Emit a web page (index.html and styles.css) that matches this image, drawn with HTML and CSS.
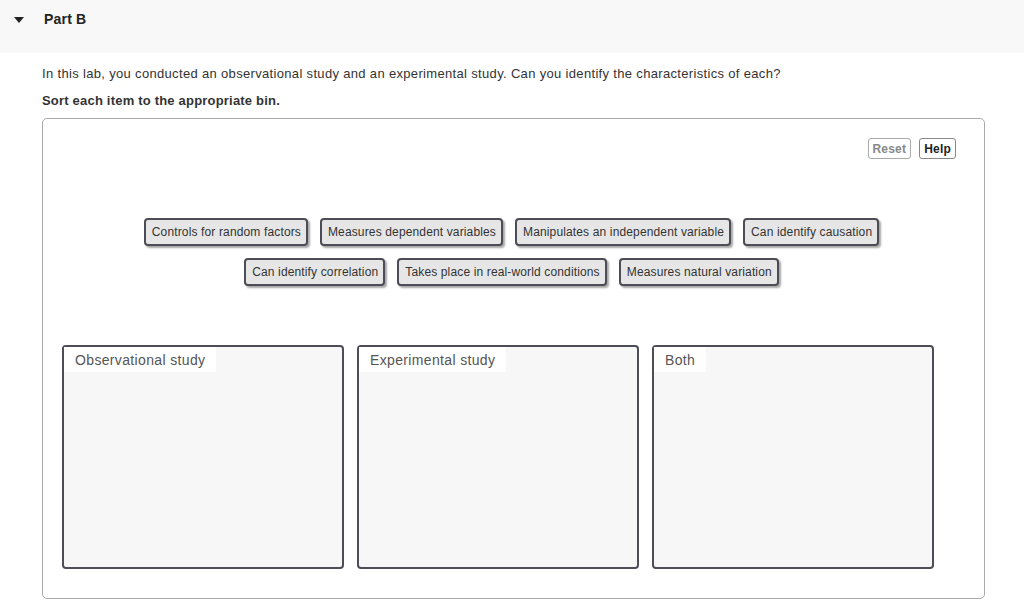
FILE: index.html
```html
<!DOCTYPE html>
<html lang="en">
<head>
    <meta charset="UTF-8">
    <meta name="viewport" content="width=device-width, initial-scale=1.0">
    <title>Part B</title>
    <link rel="stylesheet" href="styles.css">
</head>
<body>
    <div class="part-header">
        <span class="caret"></span>
        <span class="part-title">Part B</span>
    </div>
    <div class="part-body">
        <p class="intro">In this lab, you conducted an observational study and an experimental study. Can you identify the characteristics of each?</p>
        <p class="instruction">Sort each item to the appropriate bin.</p>
        <div class="sorter">
            <div class="tools">
                <button class="tool-btn disabled">Reset</button>
                <button class="tool-btn">Help</button>
            </div>
            <div class="items">
                <div class="item">Controls for random factors</div>
                <div class="item">Measures dependent variables</div>
                <div class="item">Manipulates an independent variable</div>
                <div class="item">Can identify causation</div>
                <div class="item">Can identify correlation</div>
                <div class="item">Takes place in real-world conditions</div>
                <div class="item">Measures natural variation</div>
            </div>
            <div class="bins">
                <div class="bin"><span class="bin-label">Observational study</span></div>
                <div class="bin"><span class="bin-label">Experimental study</span></div>
                <div class="bin"><span class="bin-label">Both</span></div>
            </div>
        </div>
    </div>
</body>
</html>
```

FILE: styles.css
```css
body {
    font-family: Arial, "Liberation Sans", sans-serif;
    margin: 0;
    padding: 0;
    background-color: #fff;
    color: #333;
}
.part-header {
    background-color: #f8f8f8;
    height: 53px;
    display: flex;
    align-items: flex-start;
    padding-top: 11px;
    box-sizing: border-box;
}
.caret {
    width: 0;
    height: 0;
    margin: 6px 0 0 14px;
    border-left: 5px solid transparent;
    border-right: 5px solid transparent;
    border-top: 6px solid #222;
}
.part-title {
    margin-left: 20px;
    font-size: 14px;
    font-weight: bold;
    color: #222;
    letter-spacing: 0.2px;
}
.part-body {
    padding: 13px 39px 0 42px;
}
.intro {
    margin: 0;
    font-size: 13px;
    line-height: 16px;
    letter-spacing: 0.33px;
}
.instruction {
    margin: 11px 0 0;
    font-size: 13px;
    line-height: 16px;
    font-weight: bold;
    letter-spacing: 0.2px;
}
.sorter {
    margin-top: 9px;
    border: 1px solid #aaa;
    border-radius: 5px;
    height: 481px;
    box-sizing: border-box;
    padding: 19px 28px 0 19px;
}
.tools {
    display: flex;
    justify-content: flex-end;
    gap: 8px;
}
.tool-btn {
    font-family: Arial, "Liberation Sans", sans-serif;
    font-size: 12px;
    font-weight: bold;
    color: #222;
    background: #fff;
    border: 1px solid #888;
    border-radius: 3px;
    padding: 2px 4px;
    height: 21px;
    letter-spacing: 0.2px;
}
.tool-btn.disabled {
    color: #888;
    border-color: #aaa;
}
.items {
    display: flex;
    flex-wrap: wrap;
    justify-content: center;
    gap: 12px 12px;
    width: 780px;
    margin: 59px auto 0;
    padding-left: 5px;
}
.item {
    font-size: 12px;
    line-height: 14px;
    color: #333;
    background-color: #e6e6e6;
    border: 2px solid #4d4d57;
    border-radius: 4px;
    padding: 5px 5px 5px 6px;
    letter-spacing: 0.14px;
    box-shadow: 2px 2px 2px rgba(0, 0, 0, 0.35);
}
.bins {
    display: flex;
    gap: 13px;
    margin-top: 59px;
}
.bin {
    width: 282px;
    height: 224px;
    box-sizing: border-box;
    background-color: #f7f7f7;
    border: 2px solid #4d4d57;
    border-radius: 4px;
    display: flex;
    align-items: flex-start;
}
.bin-label {
    background-color: #fff;
    font-size: 14px;
    line-height: 23px;
    color: #555;
    padding: 2px 11px 0 11px;
    letter-spacing: 0.35px;
}
```
